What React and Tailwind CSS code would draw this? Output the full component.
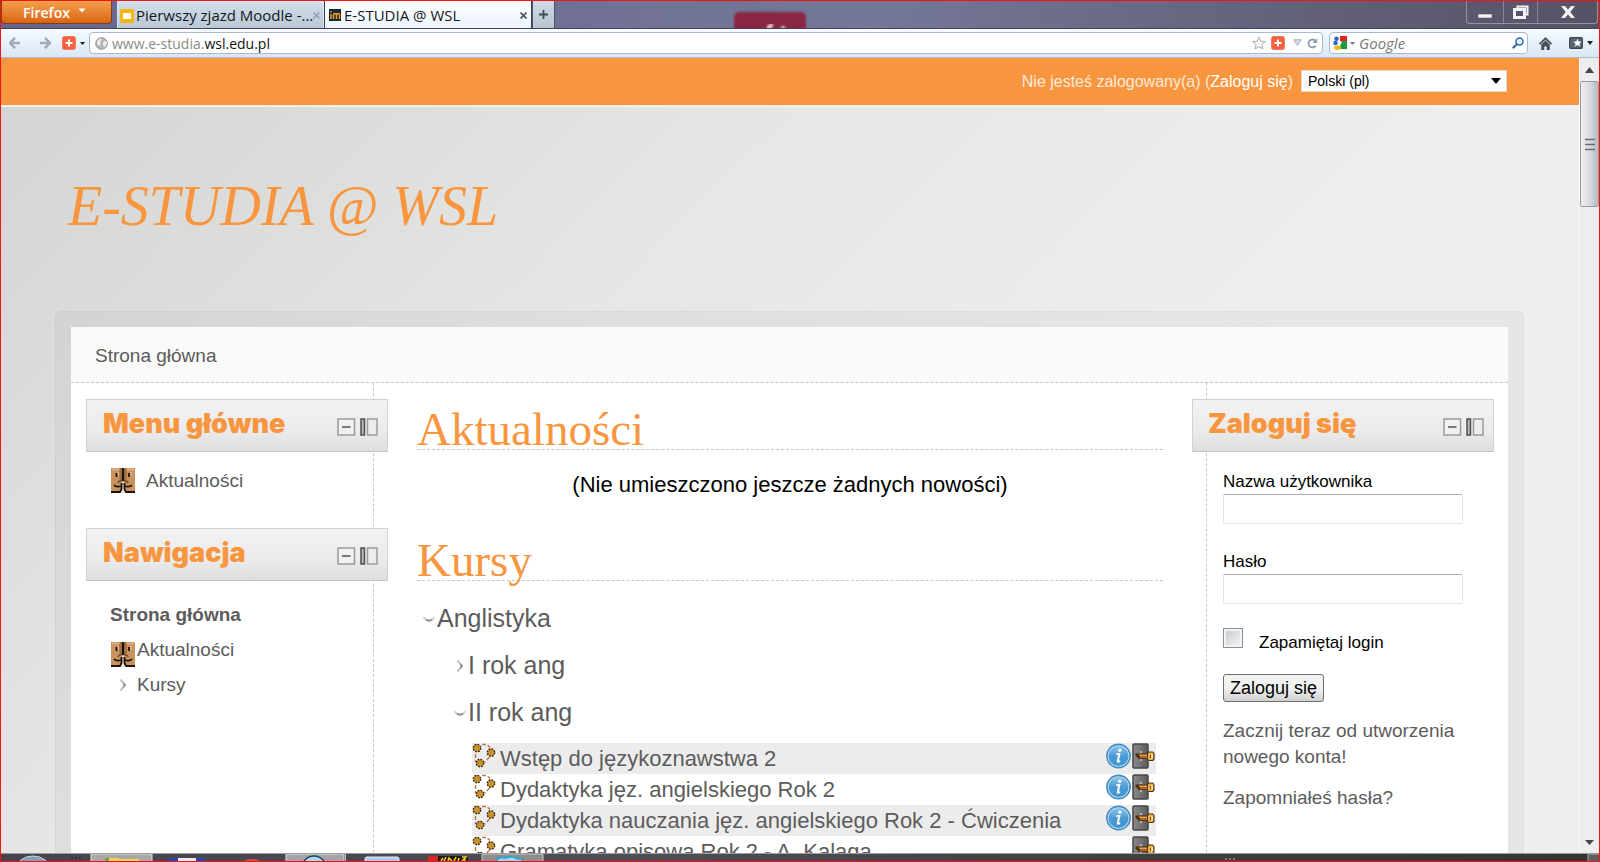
import React from "react";

const courses = [
  { name: "Wstęp do językoznawstwa 2", info: true },
  { name: "Dydaktyka jęz. angielskiego Rok 2", info: true },
  { name: "Dydaktyka nauczania jęz. angielskiego Rok 2 - Ćwiczenia", info: true },
  { name: "Gramatyka opisowa Rok 2 - A. Kalaga", info: false },
];

function PlusBadge() {
  return (
    <svg width="14" height="14" viewBox="0 0 14 14" className="shrink-0">
      <rect x="0.5" y="0.5" width="13" height="13" rx="2" fill="#f9603f" stroke="#ec7a62" />
      <path d="M7 3.5v7M3.5 7h7" stroke="#fff" strokeWidth="2" />
    </svg>
  );
}

function Caret({ className }) {
  return (
    <svg width="8" height="5" viewBox="0 0 8 5" className={className}>
      <path d="M0.5 0.5h7L4 4.5z" fill="currentColor" />
    </svg>
  );
}

function NavArrow({ flip }) {
  return (
    <svg width="12" height="12" viewBox="0 0 12 12" className={flip ? "rotate-180" : ""}>
      <path d="M6 0.8L1 6l5 5.2M1.5 6H11" fill="none" stroke="#a3acb6" strokeWidth="2.6" />
    </svg>
  );
}

function WindowTitle() {
  return (
    <header className="flex h-7 items-start bg-linear-to-r from-[#66668f] via-[#757797] via-55% to-[#565266] border-b border-[#44435e]">
      <button className="flex h-[23px] w-[111px] shrink-0 items-center justify-center gap-2 rounded-b border border-t-0 border-[#7d3e1c] bg-linear-to-b from-[#f4a14b] to-[#d9640f] pr-1 font-['Open_Sans',sans-serif] text-[14px] font-semibold text-white">
        Firefox
        <Caret className="mb-1" />
      </button>
      <div className="ml-[5px] flex h-[27px] shrink-0 font-['Open_Sans',sans-serif] text-[15px] text-[#15181c]">
        <div className="flex w-[207px] items-center border-x border-t border-[#dde7f0] bg-linear-to-b from-[#d3dfea] to-[#b9c8d6] pt-px pr-1 pl-[2px]">
          <svg width="14" height="14" viewBox="0 0 14 14" className="shrink-0">
            <rect width="14" height="14" rx="2" fill="#f6b50c" />
            <rect x="3" y="4" width="8" height="6" fill="#fff" />
          </svg>
          <span className="ml-[2px] flex-1 whitespace-nowrap">Pierwszy zjazd Moodle -...</span>
          <button aria-label="Zamknij kartę">
            <svg width="7" height="7" viewBox="0 0 7 7">
              <path d="M0.5 0.5l6 6M6.5 0.5l-6 6" stroke="#8f9ba8" strokeWidth="1.4" />
            </svg>
          </button>
        </div>
        <div className="flex w-[208px] items-center border-x border-[#3b3d5c] bg-linear-to-b from-white to-[#ebf3fb] pt-px pr-1 pl-1">
          <svg width="12" height="12" viewBox="0 0 12 12" className="shrink-0">
            <rect width="12" height="12" fill="#17292c" />
            <path d="M2 10V5M2 2v1.5M4.5 10V6q0-1.500 1.500-1.500t1.500 1.500v4M7.500 6q0-1.500 1.500-1.500t1.500 1.500v4" stroke="#f59a33" strokeWidth="1.500" fill="none" />
          </svg>
          <span className="ml-[3px] flex-1 whitespace-nowrap">E-STUDIA @ WSL</span>
          <button aria-label="Zamknij kartę">
            <svg width="7" height="7" viewBox="0 0 7 7">
              <path d="M0.5 0.5l6 6M6.5 0.5l-6 6" stroke="#4b545e" strokeWidth="1.6" />
            </svg>
          </button>
        </div>
        <button aria-label="Nowa karta" className="flex w-[23px] items-center justify-center border-x border-[#52536f] bg-linear-to-b from-[#d0dae4] to-[#b8c5d2]">
          <svg width="9" height="9" viewBox="0 0 9 9">
            <path d="M4.5 0v9M0 4.5h9" stroke="#3e4954" strokeWidth="1.8" />
          </svg>
        </button>
      </div>
      <div className="flex flex-1 justify-start">
        <svg width="74" height="27" viewBox="0 0 74 27" className="ml-[178px]">
          <defs>
            <filter id="glassBlur"><feGaussianBlur stdDeviation="1.3" /></filter>
          </defs>
          <rect x="1" y="11" width="72" height="30" rx="5" fill="#8a2742" filter="url(#glassBlur)" />
          <path d="M35 29q1-5 5-5M48 28l4-1" stroke="#e8cfc8" strokeWidth="4" fill="none" filter="url(#glassBlur)" />
        </svg>
      </div>
      <div className="mr-px flex h-[23px] shrink-0 rounded-b border border-t-0 border-[#9593a3] text-white">
        <button aria-label="Minimalizuj" className="flex w-9 items-center justify-center">
          <svg width="14" height="12" viewBox="0 0 14 12"><rect y="8" width="14" height="4" fill="#f3f3f5" stroke="#45424f" strokeWidth="0.5" /></svg>
        </button>
        <button aria-label="Przywróć" className="flex w-[35px] items-center justify-center border-x border-[#868495]">
          <svg width="16" height="14" viewBox="0 0 16 14">
            <path d="M4.5 3V1.5h10v8H12" fill="none" stroke="#f3f3f5" strokeWidth="2" />
            <rect x="1.5" y="4.5" width="10" height="8" fill="none" stroke="#f3f3f5" strokeWidth="3" />
          </svg>
        </button>
        <button aria-label="Zamknij" className="flex w-[59px] items-center justify-center">
          <svg width="14" height="12" viewBox="0 0 14 12"><path d="M0 0h4l3 3.5L10 0h4L9.3 6l4.700 6h-4L7 8.500 4 12H0l4.700-6z" fill="#f3f3f5" /></svg>
        </button>
      </div>
    </header>
  );
}

function NavigationBar() {
  return (
    <nav className="flex h-[29px] items-center border-b border-[#a9bed4] bg-linear-to-b from-[#f7fbff] to-[#d9e7f5] pl-2 font-['Open_Sans',sans-serif] text-[14px]">
      <button aria-label="Wstecz"><NavArrow /></button>
      <button aria-label="Dalej" className="ml-[18px]"><NavArrow flip /></button>
      <button aria-label="Dodatek" className="ml-[11px] flex items-center gap-1">
        <PlusBadge />
        <svg width="5" height="3" viewBox="0 0 5 3"><path d="M0 0h5L2.5 3z" fill="#222" /></svg>
      </button>
      <div className="ml-1 flex h-[22px] flex-1 items-center rounded-sm border border-[#a9b9ca] bg-white pr-1 pl-[5px]">
        <svg width="13" height="13" viewBox="0 0 13 13" className="shrink-0">
          <circle cx="6.5" cy="6.5" r="5.8" fill="#b5b5b5" stroke="#929292" />
          <path d="M2 4l3-2.500 2 1-2 2.500 1 2-2 2-2-2zM8 5l3-1.500 1 3-2 3.500-2-1.500z" fill="#ececec" />
        </svg>
        <p className="ml-1 flex-1 pt-px text-[#8a8a8a]">www.e-studia.<span className="text-[#111]">wsl.edu.pl</span></p>
        <button aria-label="Zakładka">
          <svg width="14" height="14" viewBox="0 0 14 14"><path d="M7 1l1.800 4.200 4.500.4-3.400 3 1 4.400L7 10.700 3.100 13l1-4.400-3.400-3 4.500-.4z" fill="#f7f7f7" stroke="#a8adb2" /></svg>
        </button>
        <span className="ml-[5px]"><PlusBadge /></span>
        <svg width="9" height="8" viewBox="0 0 9 8" className="ml-2"><path d="M0.8 0.8h7.400L4.500 6.500z" fill="#d9dfe6" stroke="#a2abb5" /></svg>
        <button aria-label="Odśwież" className="ml-[5px]">
          <svg width="11" height="11" viewBox="0 0 11 11"><path d="M8.800 7.800A4 4 0 1 1 8.500 2.800" fill="none" stroke="#8f9baa" strokeWidth="1.8" /><path d="M10.200 0v5H5.500z" fill="#8f9baa" /></svg>
        </button>
      </div>
      <div className="ml-[6px] flex h-[22px] w-[199px] shrink-0 items-center rounded-sm border border-[#a9b9ca] bg-white px-[3px]">
        <svg width="14" height="14" viewBox="0 0 14 14" className="shrink-0">
          <rect x="7" width="7" height="5" fill="#e3241b" />
          <rect x="7" y="5" width="7" height="8" fill="#129a3c" />
          <circle cx="3.5" cy="2.8" r="2.3" fill="#2b62c4" />
          <circle cx="2.5" cy="7" r="2.2" fill="#2b62c4" />
          <ellipse cx="4.5" cy="11.7" rx="3.5" ry="2.2" fill="#f6b816" />
          <path d="M6 4l3 2-2 4-2-2z" fill="#fff" />
        </svg>
        <svg width="5" height="3" viewBox="0 0 5 3" className="ml-[3px] shrink-0"><path d="M0 0h5L2.5 3z" fill="#777" /></svg>
        <input aria-label="Szukaj" placeholder="Google" className="ml-1 min-w-0 flex-1 bg-transparent pt-px text-[15px] italic outline-none placeholder:text-[#777]" />
        <button aria-label="Szukaj w sieci">
          <svg width="12" height="12" viewBox="0 0 12 12"><circle cx="7.5" cy="4.5" r="3.5" fill="#e8f3fc" stroke="#2c68ac" strokeWidth="1.5" /><path d="M5 7L0.8 11.2" stroke="#2c68ac" strokeWidth="2" /></svg>
        </button>
      </div>
      <button aria-label="Strona startowa" className="ml-[11px]">
        <svg width="13" height="13" viewBox="0 0 13 13"><path d="M0.5 7.2L6.5 1.3l6 5.900" fill="none" stroke="#47525e" strokeWidth="1.8" /><path d="M2.200 7.500L6.500 3.500l4.300 4V13H7.700V9.500H5.300V13H2.200z" fill="#47525e" /></svg>
      </button>
      <button aria-label="Zakładki" className="mr-[6px] ml-[17px] flex items-center gap-1 text-[#222]">
        <svg width="14" height="12" viewBox="0 0 14 12"><rect x="0.7" y="0.7" width="12.6" height="10.6" rx="1" fill="#5b6672" stroke="#3c4651" strokeWidth="1.3" /><path d="M8.500 1.800l1.200 2.700 3 .2-2.300 2 .8 3-2.700-1.600-2.700 1.600.8-3-2.300-2 3-.2z" fill="#fff" /></svg>
        <svg width="6" height="4" viewBox="0 0 6 4"><path d="M0 0h6L3 4z" fill="currentColor" /></svg>
      </button>
    </nav>
  );
}

function FaceIcon() {
  return (
    <svg width="24" height="25" viewBox="0 0 24 25" className="shrink-0">
      <rect width="24" height="24" fill="#c9935f" />
      <path d="M1 1.500h9M14 1.500h9" stroke="#dcb084" strokeWidth="2" />
      <path d="M9.500 0q-1 6 0 12M14.500 0q1 6 0 12" stroke="#9c693c" strokeWidth="1.5" fill="none" />
      <path d="M12 0v14" stroke="#1c120a" strokeWidth="2.6" />
      <path d="M5.500 5v4M18 5v4" stroke="#1c120a" strokeWidth="1.8" />
      <path d="M7.500 4v4M20 4v4" stroke="#e6c5a2" strokeWidth="1" />
      <path d="M10.500 12.500q-3 .5-3.500 2.500M13.500 12.500q3 .5 3.500 2.500" stroke="#7a4c25" strokeWidth="1.6" fill="none" />
      <path d="M3 17q2 2.500 7 1.200M21 17q-2 2.500-7 1.200" stroke="#1c120a" strokeWidth="1.6" fill="none" />
      <path d="M11.200 13h1.600v6l1.400 6h-4.400l1.400-6z" fill="#e9e4df" />
      <path d="M10.500 15v6l-1.500 3H0M13.500 15v6l1.500 3h9" fill="none" stroke="#1c120a" strokeWidth="1.8" />
    </svg>
  );
}

function Chevron({ open }) {
  return (
    <svg width="12" height="14" viewBox="0 0 12 14" className="shrink-0" fill="none">
      {open ? (
        <>
          <path d="M0.3 5.200Q6 12 11.700 5.200" stroke="#d2d2d2" strokeWidth="2" />
          <path d="M3 7.500Q6 10 9 7.500" stroke="#8f8f8f" strokeWidth="1.800" />
        </>
      ) : (
        <>
          <path d="M3.500 1.500L8 7l-4.500 5.500" stroke="#c4c4c4" strokeWidth="2" />
          <path d="M6.300 5L8 7 6.300 9" stroke="#8f8f8f" strokeWidth="1.600" />
        </>
      )}
    </svg>
  );
}

function BlockHeader({ title, side }) {
  return (
    <div className={"flex h-[53px] items-center justify-between border border-[#d2d2d2] border-b-[#c4c4c4] bg-linear-to-b from-[#f2f2f2] via-[#ebebeb] via-60% to-[#dedede] pr-[9px] " + (side === "left" ? "-mr-[15px] pl-4" : "-ml-[15px] pl-[15px]")}>
      <h2 className="pb-[3px] font-['Inter',sans-serif] text-[27px] leading-[48px] font-black text-[#f8963f]">{title}</h2>
      <div className="flex gap-1 pt-[3px]">
        <button aria-label={"Ukryj blok " + title}>
          <svg width="19" height="18" viewBox="0 0 19 18"><rect x="1" y="1" width="16.5" height="16" fill="#f1f1f1" stroke="#9a9a9a" strokeWidth="1.5" /><path d="M5 9h8.500" stroke="#6b6b6b" strokeWidth="1.8" /></svg>
        </button>
        <button aria-label={"Zadokuj blok " + title}>
          <svg width="18" height="18" viewBox="0 0 18 18"><rect x="1" y="1" width="3.5" height="16" fill="#b5b5b5" stroke="#4f4f4f" strokeWidth="1.5" /><rect x="7.5" y="1" width="9.5" height="16" fill="#ededed" stroke="#9a9a9a" strokeWidth="1.5" /></svg>
        </button>
      </div>
    </div>
  );
}

function CourseIcon() {
  const dots = [[5, 5], [19, 9.5], [8, 20]];
  return (
    <svg width="24" height="25" viewBox="0 0 24 25" className="shrink-0">
      <path d="M10 1.500h5l3 3M3.500 11v8M17.500 14l-5 5.500" fill="none" stroke="#ba7d50" strokeWidth="1.5" strokeDasharray="4 2" />
      {dots.map(([x, y]) => (
        <g key={x}>
          <circle cx={x} cy={y} r="3.7" fill="#c8922f" />
          <circle cx={x} cy={y} r="3.7" fill="none" stroke="#2f2410" strokeWidth="1.4" strokeDasharray="1.7 1.206" />
        </g>
      ))}
    </svg>
  );
}

function InfoIcon() {
  return (
    <svg width="25" height="26" viewBox="0 0 25 26">
      <defs>
        <linearGradient id="infoBlue" x1="0" y1="0" x2="0" y2="1"><stop offset="0" stopColor="#8cc4ea" /><stop offset="0.5" stopColor="#4b9bd3" /><stop offset="1" stopColor="#3d93d2" /></linearGradient>
      </defs>
      <circle cx="12.5" cy="13" r="11.6" fill="#c3dff2" stroke="#3f8bc0" strokeWidth="1.6" />
      <circle cx="12.5" cy="13" r="10" fill="url(#infoBlue)" />
      <circle cx="13.800" cy="7.300" r="1.700" fill="#f4f8fc" />
      <path d="M10.300 11h3l-1.500 7.500h2.400" fill="none" stroke="#f4f8fc" strokeWidth="2.100" />
    </svg>
  );
}

function KeyIcon() {
  return (
    <svg width="24" height="26" viewBox="0 0 24 26">
      <defs>
        <linearGradient id="doorGrey" x1="0" x2="1"><stop offset="0" stopColor="#8b8b8b" /><stop offset="1" stopColor="#5a5a5a" /></linearGradient>
      </defs>
      <rect x="1" y="1" width="15" height="24" rx="1" fill="url(#doorGrey)" stroke="#454545" strokeWidth="1.5" />
      <circle cx="9" cy="9" r="1.200" fill="#b5b5b5" />
      <circle cx="9" cy="17" r="1.200" fill="#b5b5b5" />
      <path d="M3.500 10.500H15l1.500-2H21l1.500 2v6L21 18h-4l-1.500-2H7L3.500 12.500z" fill="#4b2e12" />
      <path d="M6.500 11.500H15v2H8z" fill="#e9a04a" />
      <path d="M8 14.500h7.500" stroke="#c4602a" strokeWidth="1.300" />
      <path d="M16 10.500l1-1h3.500l.8 1v5.500l-.8 1H17l-1-1z" fill="#f0b63c" />
      <path d="M19 11.500h2v3.500h-2z" fill="#fbe9c4" />
      <path d="M18.500 12v3" stroke="#8a4516" strokeWidth="1.200" />
    </svg>
  );
}

function SectionHeading({ children }) {
  return (
    <h1 className="border-b border-dashed border-[#c6c6c6] font-['Liberation_Serif',serif] text-[47px] leading-[39px] text-[#f8963f]">{children}</h1>
  );
}

function LoginBlock() {
  const field = "mt-px block h-[30px] w-full rounded-xs border border-[#dfe3ea] border-t-[#aaabb4] bg-white px-1 text-[17px] outline-none";
  return (
    <aside className="w-[302px] shrink-0 border-l border-dashed border-[#c6c6c6] pt-4 pr-[14px]">
      <BlockHeader title="Zaloguj się" side="right" />
      <form className="ml-4 w-60 pt-[19px] text-[17px] leading-[22px] text-black" onSubmit={(e) => e.preventDefault()}>
        <label htmlFor="login-user" className="block">Nazwa użytkownika</label>
        <input id="login-user" type="text" className={field} />
        <label htmlFor="login-pass" className="mt-[27px] block">Hasło</label>
        <input id="login-pass" type="password" className={field} />
        <div className="mt-6 flex h-[26px] justify-start gap-4">
          <input id="login-remember" type="checkbox" className="size-5 appearance-none border border-[#8c9093] bg-linear-to-br from-[#c3c8d0] to-[#f8f8f8] shadow-[inset_0_0_0_2px_#f3f3f3] checked:bg-[#7d8fa8]" />
          <label htmlFor="login-remember" className="self-end">Zapamiętaj login</label>
        </div>
        <button type="submit" className="mt-5 flex h-7 items-center rounded-[3px] border border-[#6f6f6f] bg-linear-to-b from-[#f2f2f2] from-50% to-[#d0d0d0] px-[6px] text-[18px]">Zaloguj się</button>
      </form>
      <div className="mt-4 ml-4 w-60 text-[19px] leading-[26px]">
        <p><a href="#konto">Zacznij teraz od utworzenia nowego konta!</a></p>
        <p className="mt-[15px]"><a href="#haslo">Zapomniałeś hasła?</a></p>
      </div>
    </aside>
  );
}

function MoodlePage() {
  return (
    <main className="min-w-0 flex-1 overflow-hidden bg-linear-[135deg] from-[#d3d3d1] via-[#e6e6e5] via-35% to-[#eeeeee] to-65% font-['Liberation_Sans',sans-serif] text-[#5c5c5c]">
      <div className="flex h-[47px] items-center justify-end gap-2 bg-[#f8963f] pr-[72px] text-[16px] text-[#fdeadb]">
        <p>Nie jesteś zalogowany(a) (<a href="#login" className="text-white">Zaloguj się</a>)</p>
        <div className="relative -mt-[2px]">
          <select aria-label="Język" className="block h-[22px] w-[206px] appearance-none border border-[#e8d7c6] bg-white pl-[6px] text-[14px] leading-5 text-black">
            <option>Polski (pl)</option>
          </select>
          <svg width="10" height="6" viewBox="0 0 10 6" className="pointer-events-none absolute top-2 right-[6px]"><path d="M0 0h10L5 6z" fill="#000" /></svg>
        </div>
      </div>
      <div className="border-t-2 border-[#f6f2ee] pt-[69px] pl-[67px]">
        <p className="font-['Liberation_Serif',serif] text-[56px] leading-[60px] text-[#f8963f] italic">E-STUDIA @ WSL</p>
      </div>
      <div className="mt-[75px] mr-[55px] ml-[54px] rounded-md border border-black/3 bg-black/3 p-[15px]">
        <div className="bg-white">
          <div className="flex h-14 items-center border-b border-dashed border-[#c6c6c6] bg-[#fafafa] pt-[3px] pl-6 text-[19px]">
            <a href="#home">Strona główna</a>
          </div>
          <div className="flex min-h-[600px]">
            <aside className="w-[303px] shrink-0 border-r border-dashed border-[#c6c6c6] pt-4 pl-[15px] text-[19px]">
              <BlockHeader title="Menu główne" side="left" />
              <ul className="pt-[11px] pb-[30px] pl-[25px] leading-[35px]">
                <li><a href="#news" className="flex items-center gap-[11px]"><FaceIcon />Aktualności</a></li>
              </ul>
              <BlockHeader title="Nawigacja" side="left" />
              <ul className="pt-4 pl-6 leading-[35px]">
                <li><a href="#home" className="font-bold">Strona główna</a></li>
                <li><a href="#news" className="ml-px flex items-end gap-[2px]"><FaceIcon />Aktualności</a></li>
                <li><a href="#courses" className="ml-[7px] flex items-center gap-2"><Chevron />Kursy</a></li>
              </ul>
            </aside>
            <section className="min-w-0 flex-1 px-[43px] pt-[27px]">
              <SectionHeading>Aktualności</SectionHeading>
              <p className="mt-[19px] mb-10 text-center text-[22px] leading-8 text-black">(Nie umieszczono jeszcze żadnych nowości)</p>
              <SectionHeading>Kursy</SectionHeading>
              <div className="mt-[14px] pl-[6px] text-[25px] leading-[47px]">
                <a href="#ang" className="flex items-center gap-[2px]"><Chevron open />Anglistyka</a>
                <div className="pl-[31px]">
                  <a href="#rok1" className="flex items-center gap-[2px]"><Chevron />I rok ang</a>
                  <a href="#rok2" className="flex items-center gap-[2px]"><Chevron open />II rok ang</a>
                </div>
              </div>
              <ul className="mt-[7px] mr-[7px] ml-[55px] text-[22px] leading-[31px]">
                {courses.map((c) => (
                  <li key={c.name} className="flex h-[31px] items-start odd:bg-[#ececec]">
                    <a href="#course" className="flex flex-1 items-start gap-1 whitespace-nowrap"><CourseIcon />{c.name}</a>
                    <span className="flex gap-px">
                      {c.info && <InfoIcon />}
                      <KeyIcon />
                    </span>
                  </li>
                ))}
              </ul>
            </section>
            <LoginBlock />
          </div>
        </div>
      </div>
    </main>
  );
}

function ScrollTrack() {
  return (
    <div className="flex w-5 shrink-0 flex-col items-center border-l border-[#f8f8f8] bg-[#ededee]">
      <svg width="9" height="6" viewBox="0 0 9 6" className="mt-[9px]"><path d="M0 6h9L4.5 0z" fill="#444" /></svg>
      <div className="mt-2 flex h-[126px] w-[19px] items-center justify-center rounded-xs border border-[#9a9a9e] bg-linear-to-r from-[#f0f0f1] via-[#d9dadd] to-[#b9bbc0]">
        <svg width="10" height="13" viewBox="0 0 10 13"><path d="M0 1.500h10M0 6.500h10M0 11.500h10" stroke="#6d6d70" strokeWidth="1.6" /></svg>
      </div>
      <svg width="9" height="5" viewBox="0 0 9 5" className="mt-auto mb-2"><path d="M0 0h9L4.5 5z" fill="#444" /></svg>
    </div>
  );
}

function Taskbar() {
  return (
    <footer className="flex h-2 shrink-0 border-t border-[#9b9b9b] bg-linear-to-r from-[#45444e] via-[#4d4d55] via-40% to-[#34342f]">
      <svg width="560" height="7" viewBox="0 0 560 7" className="shrink-0">
        <ellipse cx="32" cy="15" rx="17" ry="13" fill="#7f9fb5" stroke="#c8d4dc" />
        <path d="M70 4h12" stroke="#222" strokeDasharray="2 2" />
        <rect x="90" width="61" height="8" fill="#a9a9a5" stroke="#dedede" />
        <path d="M104 4h14v1h20v3h-34z" fill="#ebd35c" />
        <path d="M104 4h4v4h-4z" fill="#59a845" />
        <path d="M168 4h36v4h-36z" fill="#2349b5" />
        <path d="M177 4h18v4h-18z" fill="#e8edf5" />
        <ellipse cx="251" cy="12" rx="12" ry="7" fill="#d9513b" />
        <rect x="285" width="58" height="8" fill="#a3a6a8" stroke="#dedede" />
        <path d="M344.5 0v8" stroke="#bdbdbd" />
        <circle cx="313" cy="14" r="12" fill="#a5dcee" stroke="#1e4561" strokeWidth="1.5" />
        <rect x="364" y="3" width="34" height="8" rx="2" fill="#a9cdf0" stroke="#e8f1fa" />
        <rect x="427" y="2" width="40" height="8" fill="#1c1913" />
        <rect x="427" y="2" width="10" height="8" fill="#d3281f" />
        <path d="M440 7l2-3M443 7l2-4M447 7l1-3 3 3M453 7l2-4M457 7l1-3M461 3h4l-3 3h3" stroke="#e9cf25" strokeWidth="1.6" fill="none" />
        <rect x="481" width="61" height="8" fill="#8d8d90" stroke="#c9c9c9" />
        <path d="M495 8q2-6 9-4 8-3 12 1 6-1 5 3z" fill="#8fdcf7" stroke="#1ba5dd" strokeWidth="1.5" />
      </svg>
      <div className="flex-1" />
      <svg width="374" height="7" viewBox="0 0 374 7" className="shrink-0">
        <path d="M0 5h12" stroke="#bbb" strokeDasharray="2 2" />
        <rect x="363" width="12" height="8" fill="#5c605c" stroke="#a5a8a5" />
      </svg>
    </footer>
  );
}

export default function App() {
  return (
    <div className="flex h-screen flex-col overflow-hidden border border-[#ee1515]">
      <WindowTitle />
      <NavigationBar />
      <div className="flex min-h-0 flex-1">
        <MoodlePage />
        <ScrollTrack />
      </div>
      <Taskbar />
    </div>
  );
}
